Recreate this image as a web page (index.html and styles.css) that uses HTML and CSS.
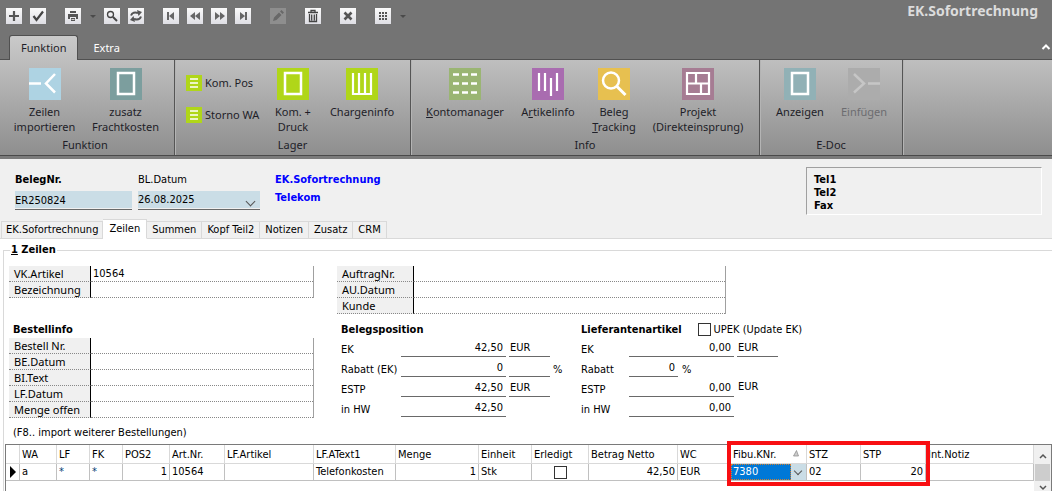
FILE: index.html
```html
<!doctype html>
<html lang="de">
<head>
<meta charset="utf-8">
<meta name="viewport" content="width=device-width,initial-scale=1">
<title>EK.Sofortrechnung</title>
<link rel="stylesheet" href="styles.css">
</head>
<body>

<header class="app-head">
  <div class="quickbar">
    <div class="qgroup">
      <button class="qbtn" aria-label="Neu"><svg viewBox="0 0 16 16"><path d="M8 3v10M3 8h10" stroke="#555" stroke-width="2.2"/></svg></button>
      <button class="qbtn" aria-label="Speichern"><svg viewBox="0 0 16 16"><path d="M3.5 8l3 4L13 3.5" fill="none" stroke="#444" stroke-width="2.2"/></svg></button>
    </div>
    <div class="qgroup">
      <button class="qbtn" aria-label="Drucken"><svg viewBox="0 0 16 16"><path d="M5 3h6v2H5zM3 6h10v5h-2V9H5v2H3zM6 10h4v3H6z" fill="#555"/><path d="M6.500 11.500h3" stroke="#eee" stroke-width=".8"/></svg></button>
      <button class="qdrop" aria-label="Druckoptionen"></button>
      <button class="qbtn" aria-label="Suchen"><svg viewBox="0 0 16 16"><circle cx="6.500" cy="6.500" r="3" fill="none" stroke="#444" stroke-width="1.300"/><path d="M9 9l4 4" stroke="#444" stroke-width="2"/></svg></button>
      <button class="qbtn" aria-label="Aktualisieren"><svg viewBox="0 0 16 16"><path d="M3 7.500C4 4.500 7 4 10 5M13 8.500c-1 3-4 3.500-7 2.500" fill="none" stroke="#555" stroke-width="1.900"/><path d="M9 2l5 2-3.500 4zM7 14l-5-2 3.500-4z" fill="#555"/></svg></button>
    </div>
    <div class="qgroup">
      <button class="qbtn" aria-label="Erster"><svg viewBox="0 0 16 16"><path d="M4 4h2v8H4zM11 4v8L6 8z" fill="#666"/></svg></button>
      <button class="qbtn" aria-label="Zurück"><svg viewBox="0 0 16 16"><path d="M8 4v8L3 8zM13 4v8L8 8z" fill="#666"/></svg></button>
      <button class="qbtn" aria-label="Weiter"><svg viewBox="0 0 16 16"><path d="M4 4v8l5-4zM9 4v8l5-4z" fill="#666"/></svg></button>
      <button class="qbtn" aria-label="Letzter"><svg viewBox="0 0 16 16"><path d="M5 4v8l5-4zM10 4h2v8h-2z" fill="#666"/></svg></button>
    </div>
    <div class="qgroup">
      <button class="qbtn off" aria-label="Bearbeiten" disabled><svg viewBox="0 0 16 16"><path d="M3 13l1-3.500 5-5L11.500 7l-5 5zM10 3.500L11.500 2 14 4.500 12.500 6z" fill="#686868"/></svg></button>
    </div>
    <div class="qgroup">
      <button class="qbtn" aria-label="Löschen"><svg viewBox="0 0 16 16"><path d="M3 4.500h10M6 4V2.500h4V4M4.500 6v7.500h7V6M6.700 6.500v6M9.300 6.500v6" fill="none" stroke="#444" stroke-width="1.300"/></svg></button>
    </div>
    <div class="qgroup">
      <button class="qbtn" aria-label="Schließen"><svg viewBox="0 0 16 16"><path d="M4.500 4.500l7 7M11.500 4.500l-7 7" stroke="#555" stroke-width="2.600"/></svg></button>
    </div>
    <div class="qgroup">
      <button class="qbtn" aria-label="Ansicht"><svg viewBox="0 0 16 16"><path d="M4 5h8M4 8h8M4 11h8" stroke="#555" stroke-width="2" stroke-dasharray="2 1"/></svg></button>
      <button class="qdrop" aria-label="Ansichtsoptionen"></button>
    </div>
    <h1 class="app-title">EK.Sofortrechnung</h1>
  </div>

  <div class="rtabs">
    <button class="rtab active">Funktion</button>
    <button class="rtab">Extra</button>
    <button class="collapse" aria-label="Menüband einklappen"><svg viewBox="0 0 10 8"><path d="M1.500 6L5 2.500 8.500 6" fill="none" stroke="#fff" stroke-width="2"/></svg></button>
  </div>

  <div class="ribbon">
    <section class="rgroup g-funktion">
      <div class="rbody">
        <button class="rbtn">
          <svg viewBox="0 0 32 32"><path fill="#aed3e3" d="M0 0h32v32H0z"/><path d="M0 15.500h12M26 6L17 15.500 26 24.500" fill="none" stroke="#fff" stroke-width="2.500"/></svg>
          <span>Zeilen<br>importieren</span>
        </button>
        <button class="rbtn">
          <svg viewBox="0 0 32 32"><path fill="#7c9e9e" d="M0 0h32v32H0z"/><path d="M8 5h16v21H8z" fill="none" stroke="#fff" stroke-width="2.500"/></svg>
          <span>zusatz<br>Frachtkosten</span>
        </button>
      </div>
      <h2>Funktion</h2>
    </section>

    <section class="rgroup g-lager">
      <div class="rbody">
        <div class="rsmall">
          <button><svg viewBox="0 0 16 16"><path fill="#b0d619" d="M0 0h16v16H0z"/><path d="M4 4h8M4 8h8M4 12h8" stroke="#fff" stroke-width="1.600"/></svg>Kom. Pos</button>
          <button><svg viewBox="0 0 16 16"><path fill="#b0d619" d="M0 0h16v16H0z"/><path d="M4 4h8M4 8h8M4 12h8" stroke="#fff" stroke-width="1.600"/></svg>Storno WA</button>
        </div>
        <button class="rbtn w-kom">
          <svg viewBox="0 0 32 32"><path fill="#b0d619" d="M0 0h32v32H0z"/><path d="M8 5h16v21H8z" fill="none" stroke="#fff" stroke-width="2.500"/></svg>
          <span>Kom. +<br>Druck</span>
        </button>
        <button class="rbtn w-charge">
          <svg viewBox="0 0 32 32"><path fill="#b0d619" d="M0 0h32v32H0z"/><path d="M7 5v21h18V5M13 5v21M19 5v21" fill="none" stroke="#fff" stroke-width="2.200"/></svg>
          <span>Chargeninfo</span>
        </button>
      </div>
      <h2>Lager</h2>
    </section>

    <section class="rgroup g-info">
      <div class="rbody">
        <button class="rbtn w-charge">
          <svg viewBox="0 0 32 32"><path fill="#9ab573" d="M0 0h32v32H0z"/><path d="M4 6.500h24M4 15.500h24M4 24.500h24" stroke="#fff" stroke-width="2.500" stroke-dasharray="6 3"/></svg>
          <span><u>K</u>ontomanager</span>
        </button>
        <button class="rbtn w-artikel">
          <svg viewBox="0 0 32 32"><path fill="#a96cb0" d="M0 0h32v32H0z"/><path d="M7 5v18M13 5v18M19 10v18M25 5v18" stroke="#fff" stroke-width="2.200"/></svg>
          <span>A<u>r</u>tikelinfo</span>
        </button>
        <button class="rbtn w-beleg">
          <svg viewBox="0 0 32 32"><path fill="#e7c050" d="M0 0h32v32H0z"/><circle cx="13" cy="12.500" r="8" fill="none" stroke="#fff" stroke-width="2.500"/><path d="M18.500 18l9 9" stroke="#fff" stroke-width="3"/></svg>
          <span>Beleg<br><u>T</u>racking</span>
        </button>
        <button class="rbtn w-projekt">
          <svg viewBox="0 0 32 32"><path fill="#a67c93" d="M0 0h32v32H0z"/><path d="M5 5h22v21H5zM5 15.500h22M14 5v10.500M19 15.500V26" fill="none" stroke="#fff" stroke-width="2.200"/></svg>
          <span>Projekt<br>(Direkteinsprung)</span>
        </button>
      </div>
      <h2>Info</h2>
    </section>

    <section class="rgroup g-edoc">
      <div class="rbody">
        <button class="rbtn w-doc">
          <svg viewBox="0 0 32 32"><path fill="#91b1b6" d="M0 0h32v32H0z"/><path d="M8 5h16v21H8z" fill="none" stroke="#fff" stroke-width="2.500"/></svg>
          <span>Anzeigen</span>
        </button>
        <button class="rbtn w-doc" disabled>
          <svg viewBox="0 0 32 32"><path fill="#acacac" d="M0 0h32v32H0z"/><path d="M6 6l10 9.500L6 24.500M20 15.500h12" fill="none" stroke="#c6c6c6" stroke-width="2.500"/></svg>
          <span>Einfügen</span>
        </button>
      </div>
      <h2>E-Doc</h2>
    </section>
  </div>
</header>

<main>
  <section class="doc-head">
    <div class="field belegnr">
      <label for="belegnr"><b>BelegNr.</b></label>
      <input id="belegnr" type="text" value="ER250824">
    </div>
    <div class="field datum">
      <label for="datum">BL.Datum</label>
      <select id="datum"><option>26.08.2025</option></select>
    </div>
    <div class="partner">
      <p>EK.Sofortrechnung</p>
      <p>Telekom</p>
    </div>
    <div class="phones">
      <p>Tel1</p>
      <p>Tel2</p>
      <p>Fax</p>
    </div>
  </section>

  <nav class="tabs">
    <button>EK.Sofortrechnung</button>
    <button class="active">Zeilen</button>
    <button>Summen</button>
    <button>Kopf Teil2</button>
    <button>Notizen</button>
    <button>Zusatz</button>
    <button>CRM</button>
  </nav>

  <div class="page">
    <fieldset>
      <legend><u>1</u> Zeilen</legend>

      <div class="row-top">
        <table class="info">
          <tr><th>VK.Artikel</th><td>10564</td></tr>
          <tr><th>Bezeichnung</th><td></td></tr>
        </table>
        <table class="info wide">
          <tr><th>AuftragNr.</th><td></td></tr>
          <tr><th>AU.Datum</th><td></td></tr>
          <tr><th>Kunde</th><td></td></tr>
        </table>
      </div>

      <div class="row-mid">
        <section class="order">
          <h3>Bestellinfo</h3>
          <table class="info">
            <tr><th>Bestell Nr.</th><td></td></tr>
            <tr><th>BE.Datum</th><td></td></tr>
            <tr><th>BI.Text</th><td></td></tr>
            <tr><th>LF.Datum</th><td></td></tr>
            <tr><th>Menge offen</th><td></td></tr>
          </table>
        </section>

        <section class="prices pos">
          <h3>Belegsposition</h3>
          <div class="price-grid">
            <label for="p-ek">EK</label><input id="p-ek" class="num" value="42,50"><input aria-label="EK Währung" value="EUR"><span></span>
            <label for="p-rab">Rabatt (EK)</label><input id="p-rab" class="num" value="0"><input aria-label="Rabatt Prozent"><span>%</span>
            <label for="p-estp">ESTP</label><input id="p-estp" class="num" value="42,50"><input aria-label="ESTP Währung" value="EUR"><span></span>
            <label for="p-hw">in HW</label><input id="p-hw" class="num" value="42,50">
          </div>
        </section>

        <section class="prices lief">
          <div class="lief-head">
            <h3>Lieferantenartikel</h3>
            <label class="check"><input type="checkbox">UPEK (Update EK)</label>
          </div>
          <div class="price-grid">
            <label for="l-ek">EK</label><input id="l-ek" class="num" value="0,00"><input aria-label="EK Währung" value="EUR">
            <label for="l-rab">Rabatt</label><div class="pct"><input id="l-rab" class="num" value="0"><span>%</span></div><span></span>
            <label for="l-estp">ESTP</label><input id="l-estp" class="num" value="0,00"><span class="cur">EUR</span>
            <label for="l-hw">in HW</label><input id="l-hw" class="num" value="0,00">
          </div>
        </section>
      </div>

      <p class="hint">(F8.. import weiterer Bestellungen)</p>

      <div class="lines">
        <table class="grid">
          <colgroup>
            <col class="c-mark"><col class="c-wa"><col class="c-lf"><col class="c-fk"><col class="c-pos"><col class="c-art"><col class="c-lfart"><col class="c-text"><col class="c-menge"><col class="c-einh"><col class="c-erl"><col class="c-netto"><col class="c-wc"><col class="c-fibu"><col class="c-stz"><col class="c-stp"><col>
          </colgroup>
          <thead>
            <tr>
              <th></th><th>WA</th><th>LF</th><th>FK</th><th>POS2</th><th>Art.Nr.</th><th>LF.Artikel</th><th>LF.AText1</th><th>Menge</th><th>Einheit</th><th>Erledigt</th><th>Betrag Netto</th><th>WC</th>
              <th><div class="sorted">Fibu.KNr.<svg viewBox="0 0 6 7"><path d="M.5 6L3.500.5 5.500 6z" fill="#ccc" stroke="#888" stroke-width=".7"/></svg></div></th><th>STZ</th><th>STP</th><th>Int.Notiz</th>
            </tr>
          </thead>
          <tbody>
            <tr>
              <td class="mark"><svg viewBox="0 0 6 12"><path d="M0 0l6 6-6 6z"/></svg></td><td>a</td><td class="star">*</td><td class="star">*</td><td class="r">1</td><td>10564</td><td></td><td>Telefonkosten</td><td class="r">1</td><td>Stk</td>
              <td class="c"><input type="checkbox" aria-label="Erledigt"></td><td class="r">42,50</td><td>EUR</td>
              <td class="edit"><select aria-label="Fibu.KNr."><option>7380</option></select></td><td>02</td><td class="r">20</td><td></td>
            </tr>
          </tbody>
        </table>
        <div class="scroll">
          <svg viewBox="0 0 8 6"><path d="M1 5l3-3 3 3" fill="none" stroke="#555" stroke-width="1.500"/></svg>
          <i></i>
          <svg viewBox="0 0 8 6"><path d="M1 1l3 3 3-3" fill="none" stroke="#555" stroke-width="1.500"/></svg>
        </div>
        <div class="marker"></div>
      </div>
    </fieldset>
  </div>
</main>

</body>
</html>
```

FILE: styles.css
```css
:root{
  --ui:"Noto Sans",sans-serif;
  --form:"DejaVu Sans Condensed","DejaVu Sans",sans-serif;
  --bg:#f0f0f0; --line:#d9d9d9; --field:#cadde6; --under:#696969;
}
*{box-sizing:border-box;margin:0;padding:0}
html{height:100%}
body{
  display:flex;flex-direction:column;height:100%;overflow:hidden;
  font:11px/16px var(--ui);color:#000;background:var(--bg)
}
button,input,select{font:inherit;color:inherit;border:0;background:none;border-radius:0;appearance:none}
button{cursor:pointer}
svg{display:block}

/* === head: quick access bar, ribbon tabs ============ */
.app-head{background:#747474;border-bottom:3px solid #7b7b7b}
.quickbar{display:flex;gap:19px;height:32px;padding:8px 14px 0 6px}
.qgroup{display:flex;gap:8px;align-items:center;height:16px}
.qbtn{width:16px;height:16px;background:linear-gradient(#fafafa,#dedee4)}
.qbtn.off{background:#8e8e8e}
.qdrop{width:7px;height:16px;display:flex;align-items:center;justify-content:center}
.qdrop::after{content:"";border:3px solid transparent;border-top-color:#4a4a4a;border-bottom:0}
.app-title{margin-left:auto;margin-top:-8px;font:700 14px/22px var(--ui);color:#dcdcdc}

.rtabs{display:flex;height:27px;padding:3px 1px 0 9px;color:#fff}
.rtab{padding:0 14px;border:1px solid transparent;border-bottom:0}
.rtab.active{
  position:relative;z-index:1;margin-bottom:-1px;padding:0 11px;color:#1e1e28;background:linear-gradient(#cacaca,#bebebe);
  border-color:#505050;border-radius:3px 3px 0 0
}
.collapse{margin-left:auto;width:10px}
.collapse svg{width:10px;height:8px}

.ribbon{
  display:flex;height:97px;color:#1e1e28;
  background:linear-gradient(#bfbfbf,#8e8e8e);
  border-top:1px solid #505050;border-bottom:1px solid #4a4a4a
}
.rgroup{display:flex;flex-direction:column;padding-top:8px;border-right:1px solid #555;box-shadow:1px 0 #b4b4b4}
.rgroup h2{font:11px/15px var(--ui);text-align:center}
.rbody{display:flex;height:69px}
.g-funktion{width:175px;padding-left:4px;padding-right:8px}
.g-lager{width:236px;padding-left:11px;padding-right:11px}
.g-info{width:349px;padding-left:10px;padding-right:10px}
.g-edoc{width:143px;padding-left:8px;padding-right:8px}
.rbtn{display:flex;flex-direction:column;flex-shrink:0;align-items:center;gap:4px;width:81px;line-height:15px;white-space:nowrap}
.rbtn svg{width:32px;height:32px}
.rbtn:disabled{color:#6c6c70}
.w-kom{width:50px}
.w-charge{width:88px}
.w-artikel{width:78px}
.w-beleg{width:54px}
.w-projekt{width:114px}
.w-doc{width:64px}
.rsmall{display:flex;flex-direction:column;flex-shrink:0;gap:16px;width:82px;padding-top:7px}
.rsmall button{display:flex;align-items:center;gap:3px;height:16px;white-space:nowrap}
.rsmall svg{width:16px;height:16px}

/* === document head ================================== */
main{flex:1;display:flex;flex-direction:column;min-height:0}
.doc-head{display:flex;padding:8px 10px 4px 15px;font-family:var(--form)}
.field{display:flex;flex-direction:column;gap:3px;padding-top:5px}
.field input,.field select{height:19px;background:var(--field);border-bottom:1px solid var(--under);box-shadow:inset 0 -1px var(--bg)}
.belegnr{width:117px}
.datum{position:relative;width:122px;margin-left:6px}
.datum::after{
  content:"";position:absolute;right:6px;bottom:10px;width:6px;height:6px;
  border:solid #555;border-width:0 1px 1px 0;transform:rotate(45deg)
}
.partner{margin-left:15px;padding-top:4px;font-weight:700;line-height:18px;color:#00f}
.phones{
  margin-left:auto;width:236px;height:48px;padding:5px 7px;font-weight:700;line-height:13px;
  border:1px solid #fff;border-top-color:#a0a0a0;border-left-color:#a0a0a0
}

.tabs{display:flex;align-items:flex-end;height:20px;padding-left:1px;font-family:var(--form);box-shadow:inset 0 -1px var(--line)}
.tabs button{height:18px;padding:0 5px;border:1px solid var(--line);border-left:0;white-space:nowrap}
.tabs button:first-child{padding:0 4px;border-left:1px solid var(--line)}
.tabs .active{height:20px;padding:0 6px 1px;background:#fff;border-bottom-color:#fff}

/* === tab page ======================================= */
.page{flex:1;min-height:0;padding:3px 0 0 3px;background:#fff}
fieldset{
  display:flex;flex-direction:column;height:100%;
  border:1px solid var(--line);border-right:0;border-bottom:0
}
legend{margin-left:6px;padding:0 1px;font:700 11px/16px var(--form)}
h3{font:700 11px/15px var(--form)}

.row-top{display:flex;gap:23px;padding:8px 0 0 5px}
.info{width:305px;height:min-content;border-spacing:0;table-layout:fixed;border-right:1px solid #a0a0a0}
.info.wide{width:389px}
.info tr{height:16px}
.info th{width:82px;padding:0 5px;font-weight:400;line-height:15px;text-align:left;background:var(--bg);border-right:1px solid #000;border-bottom:1px dotted #888}
.info.wide th{width:77px}
.info td{padding:0 2px;font:11px/15px var(--form);border-bottom:1px dotted #888}

.row-mid{display:flex;padding:8px 0 0 5px;font-family:var(--form)}
.order{width:332px;font-family:var(--ui)}
.order h3{padding-left:4px;margin-bottom:1px}
.pos{width:240px}
.lief{flex:1}
.lief-head{display:flex;gap:16px}
.check{display:flex;align-items:center;gap:3px;line-height:15px;white-space:nowrap}
input[type=checkbox]{width:13px;height:13px;border:1px solid #333;background:#fff}
.price-grid{display:grid;grid-template-columns:57px 105px 41px 1fr;grid-auto-rows:20px;column-gap:3px}
.lief .price-grid{grid-template-columns:45px 105px 41px}
.price-grid label,.price-grid span{padding-top:5px;white-space:nowrap;line-height:15px}
.price-grid input{width:100%;height:20px;padding:2px 1px 0;border-bottom:1px solid var(--under)}
.price-grid .num{padding-right:3px;text-align:right}
.price-grid .cur{padding:2px 1px 0}
.pct{display:flex;gap:4px}
.pct .num{width:49px}

.hint{padding:7px 0 3px 9px;font-family:var(--form)}

/* === invoice lines ================================== */
.lines{position:relative;flex:1;display:flex;align-items:flex-start;min-height:47px;margin-left:1px;border:1px solid #7a7a7a;border-bottom:0;font-family:var(--form)}
.grid{flex:1;width:100%;border-spacing:0;table-layout:fixed}
.grid th,.grid td{height:17px;padding:0 2px;font-weight:400;line-height:16px;text-align:left;white-space:nowrap;overflow:hidden;border-right:1px solid #c0c0c0;border-bottom:1px solid #c0c0c0}
.grid th{height:19px;padding-top:1px;border-color:var(--line)}
.grid .r{text-align:right}
.grid .c{text-align:center}
.grid .c input{display:block;margin:0 auto}
.grid .star{color:#003c74}
.grid .mark{padding-left:4px}
.mark svg{width:6px;height:12px}
.c-mark{width:14px}
.c-wa{width:37px}
.c-lf{width:33px}
.c-fk{width:33px}
.c-pos{width:47px}
.c-art{width:55px}
.c-lfart{width:89px}
.c-text{width:82px}
.c-menge{width:83px}
.c-einh{width:53px}
.c-erl{width:57px}
.c-netto{width:89px}
.c-wc{width:53px}
.c-fibu{width:76px}
.c-stz{width:54px}
.c-stp{width:65px}
.sorted{display:flex;justify-content:space-between;padding-right:5px}
.sorted svg{width:6px;height:7px;margin-top:3px}
.grid .edit{position:relative;padding:0 15px 0 0;background:var(--field)}
.edit select{display:block;width:100%;height:16px;padding:0 2px;color:#fff;background:#0078d7;outline:1px dotted #d08030;outline-offset:-1px}
.edit::after{
  content:"";position:absolute;right:5px;top:4px;width:5px;height:5px;
  border:solid #555;border-width:0 1px 1px 0;transform:rotate(45deg)
}
.scroll{display:flex;flex-direction:column;align-items:center;justify-content:space-between;width:17px;height:47px;padding:8px 0 1px;background:var(--bg)}
.scroll svg{width:8px;height:6px}
.scroll i{width:15px;height:17px;background:#cdcdcd}
.marker{position:absolute;left:721px;top:-4px;width:203px;height:45px;border:4px solid #f80f12;pointer-events:none}
```
